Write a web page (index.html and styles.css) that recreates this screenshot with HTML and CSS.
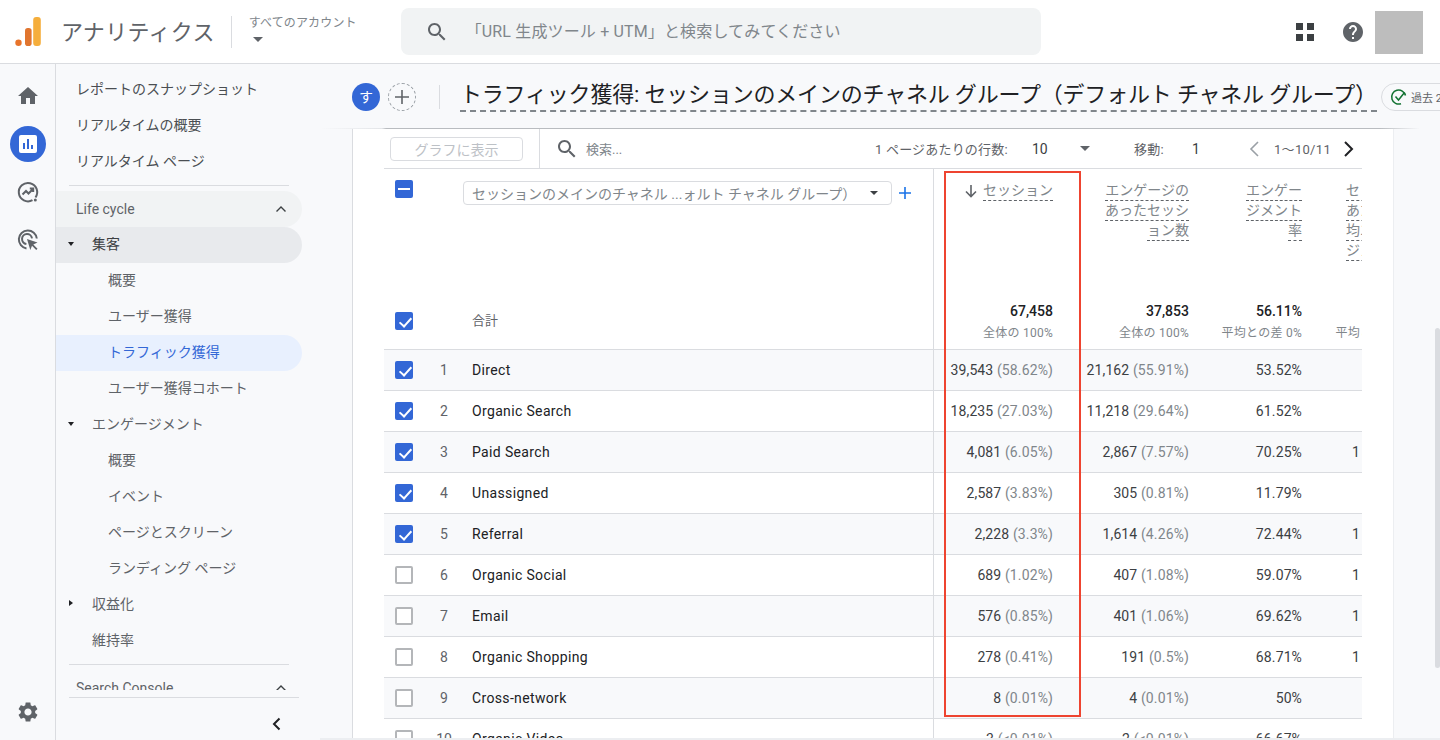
FILE: index.html
```html
<!DOCTYPE html>
<html lang="ja">
<head>
  <meta charset="UTF-8">
  <title>アナリティクス</title>
  <link rel="stylesheet" href="styles.css">
</head>
<body>
  <!-- トップバー -->
  <header class="topbar">
    <svg class="logo" width="26" height="29" viewBox="0 0 26 29">
      <circle cx="3.500" cy="25.700" r="3.200" fill="#e8742b"/>
      <rect x="10" y="11" width="6.600" height="18" rx="2.800" fill="#e0752f"/>
      <rect x="18.200" y="0" width="7.600" height="29" rx="3" fill="#f5ae3c"/>
    </svg>
    <div class="brand">アナリティクス</div>
    <div class="account">
      <div class="account-label">すべてのアカウント</div>
      <span class="caret caret-big"></span>
    </div>
    <div class="global-search">
      <svg class="icon" width="24" height="24" viewBox="0 0 24 24"><path d="M15.5 14h-.79l-.28-.27C15.41 12.59 16 11.11 16 9.5 16 5.91 13.09 3 9.5 3S3 5.91 3 9.5 5.91 16 9.5 16c1.61 0 3.09-.59 4.23-1.57l.27.28v.79l5 4.99L20.49 19l-4.99-5zm-6 0C7.01 14 5 11.99 5 9.5S7.01 5 9.5 5 14 7.01 14 9.5 11.99 14 9.5 14z"/></svg>
      <span class="global-search-text">「URL 生成ツール + UTM」と検索してみてください</span>
    </div>
    <div class="top-actions">
      <svg class="apps" width="18" height="18" viewBox="0 0 18 18"><path d="M0 0h7v7H0zM11 0h7v7h-7zM0 11h7v7H0zM11 11h7v7h-7z"/></svg>
      <svg class="icon" width="24" height="24" viewBox="0 0 24 24"><path d="M12 2C6.48 2 2 6.48 2 12s4.48 10 10 10 10-4.48 10-10S17.52 2 12 2zm1 17h-2v-2h2v2zm2.07-7.75l-.9.92C13.45 12.9 13 13.5 13 15h-2v-.5c0-1.1.45-2.1 1.17-2.83l1.24-1.26c.37-.36.59-.86.59-1.41 0-1.1-.9-2-2-2s-2 .9-2 2H8c0-2.21 1.79-4 4-4s4 1.79 4 4c0 .88-.36 1.68-.93 2.25z"/></svg>
      <div class="avatar"></div>
    </div>
  </header>

  <div class="app">
    <!-- 左端のアイコン列 -->
    <aside class="rail">
      <div class="rail-item">
        <svg class="icon" width="24" height="24" viewBox="0 0 24 24"><path d="M10 20v-6h4v6h5v-8h3L12 3 2 12h3v8z"/></svg>
      </div>
      <div class="rail-item">
        <div class="rail-active">
          <svg width="20" height="20" viewBox="0 0 20 20"><path fill="#fff" fill-rule="evenodd" d="M3 1h14a2 2 0 0 1 2 2v14a2 2 0 0 1-2 2H3a2 2 0 0 1-2-2V3a2 2 0 0 1 2-2zM5 9v6h2V9zM9 5v10h2V5zM13 11v4h2v-4z"/></svg>
        </div>
      </div>
      <div class="rail-item">
        <svg width="24" height="24" viewBox="0 0 24 24" fill="none" stroke="#5f6368" stroke-width="2"><path d="M19.500 17.500A9.200 9.200 0 1 0 16.500 20.200"/><path d="M6.500 14.500l3.500-3.500 2.500 2.500 4.500-4.500M13.800 8.500h3.400v3.400"/><circle cx="19.300" cy="20" r="1.500" fill="#5f6368" stroke="none"/></svg>
      </div>
      <div class="rail-item">
        <svg width="24" height="24" viewBox="0 0 24 24" fill="none" stroke="#5f6368" stroke-width="2"><path d="M10.500 20.400A9 9 0 1 1 20.800 10.500"/><path d="M10.400 16A5 5 0 1 1 16 10.400"/><path d="M11 11l10.500 3.600-4.200 1.900 4.200 4.200-1.300 1.300-4.200-4.200-1.700 4.200z" fill="#5f6368" stroke="none"/></svg>
      </div>
      <div class="rail-spacer"></div>
      <svg class="icon" width="24" height="24" viewBox="0 0 24 24"><path d="M19.14 12.94c.04-.3.06-.61.06-.94 0-.32-.02-.64-.07-.94l2.03-1.58c.18-.14.23-.41.12-.61l-1.92-3.32c-.12-.22-.37-.29-.59-.22l-2.39.96c-.5-.38-1.03-.7-1.62-.94l-.36-2.54c-.04-.24-.24-.41-.48-.41h-3.84c-.24 0-.43.17-.47.41l-.36 2.54c-.59.24-1.13.57-1.62.94l-2.39-.96c-.22-.08-.47 0-.59.22L2.74 8.87c-.12.21-.08.47.12.61l2.03 1.58c-.05.3-.09.63-.09.94s.02.64.07.94l-2.03 1.58c-.18.14-.23.41-.12.61l1.92 3.32c.12.22.37.29.59.22l2.39-.96c.5.38 1.03.7 1.62.94l.36 2.54c.05.24.24.41.48.41h3.84c.24 0 .44-.17.47-.41l.36-2.54c.59-.24 1.13-.56 1.62-.94l2.39.96c.22.08.47 0 .59-.22l1.92-3.32c.12-.22.07-.47-.12-.61l-2.01-1.58zM12 15.6c-1.98 0-3.6-1.62-3.6-3.6s1.62-3.6 3.6-3.6 3.6 1.62 3.6 3.6-1.62 3.6-3.6 3.6z"/></svg>
    </aside>

    <!-- レポートのナビ -->
    <nav class="sidenav">
      <div class="nav-scroll">
        <a class="nav-top">レポートのスナップショット</a>
        <a class="nav-top">リアルタイムの概要</a>
        <a class="nav-top">リアルタイム ページ</a>
        <div class="nav-rule"></div>
        <div class="nav-section">Life cycle <svg class="chev" width="12" height="8" viewBox="0 0 12 8"><path d="M1.500 6.500L6 2l4.500 4.500"/></svg></div>
        <div class="nav-group is-open"><span class="tri tri-down"></span>集客</div>
        <a class="nav-sub">概要</a>
        <a class="nav-sub">ユーザー獲得</a>
        <a class="nav-sub is-active">トラフィック獲得</a>
        <a class="nav-sub">ユーザー獲得コホート</a>
        <div class="nav-group"><span class="tri tri-down"></span>エンゲージメント</div>
        <a class="nav-sub">概要</a>
        <a class="nav-sub">イベント</a>
        <a class="nav-sub">ページとスクリーン</a>
        <a class="nav-sub">ランディング ページ</a>
        <div class="nav-group"><span class="tri tri-right"></span>収益化</div>
        <div class="nav-group"><span class="tri"></span>維持率</div>
        <div class="nav-rule nav-rule-2"></div>
        <div class="nav-section nav-section-2">Search Console <svg class="chev" width="12" height="8" viewBox="0 0 12 8"><path d="M1.500 6.500L6 2l4.500 4.500"/></svg></div>
      </div>
      <div class="nav-foot">
        <svg width="12" height="16" viewBox="0 0 12 16" fill="none" stroke="#202124" stroke-width="2"><path d="M9.500 2.500L4 8l5.500 5.500"/></svg>
      </div>
    </nav>

    <main class="content">
      <!-- タイトル -->
      <div class="titlebar">
        <div class="badge">す</div>
        <div class="add-compare">
          <svg width="14" height="14" viewBox="0 0 14 14"><path d="M6.200 0h1.600v6.200H14v1.600H7.800V14H6.200V7.800H0V6.200h6.200z" fill="#5f6368"/></svg>
        </div>
        <div class="title-sep"></div>
        <h1 class="title">トラフィック獲得: セッションのメインのチャネル グループ（デフォルト チャネル グループ）</h1>
        <div class="status-chip">
          <svg width="18" height="18" viewBox="0 0 18 18" fill="none" stroke="#137333" stroke-width="1.500"><path d="M15.500 7.500A7 7 0 1 0 11 15.700"/><path d="M5.500 8.500l3 3.500 6-7.500"/></svg>
          <span>過去 28 日間</span>
        </div>
      </div>

      <div class="body-wrap">
        <section class="card">
          <div class="table-wrap">
            <div class="toolbar">
              <div class="toolbar-left"><button class="plot-btn">グラフに表示</button></div>
              <div class="toolbar-right">
                <svg class="icon" width="24" height="24" viewBox="0 0 24 24"><path d="M15.500 14h-.79l-.28-.27C15.410 12.590 16 11.110 16 9.500 16 5.910 13.090 3 9.500 3S3 5.910 3 9.500 5.910 16 9.500 16c1.610 0 3.090-.59 4.230-1.570l.27.28v.79l5 4.990L20.490 19l-4.990-5zm-6 0C7.010 14 5 11.990 5 9.500S7.010 5 9.500 5 14 7.010 14 9.500 11.990 14 9.500 14z"/></svg>
                <span class="table-search">検索...</span>
                <span class="pager pager-rows">1 ページあたりの行数:</span>
                <span class="pager pager-num">10</span>
                <span class="caret"></span>
                <span class="pager pager-move">移動:</span>
                <span class="pager pager-page">1</span>
                <svg class="pager-prev" width="14" height="20" viewBox="0 0 14 20" fill="none" stroke="#9aa0a6" stroke-width="1.600"><path d="M11 3L4 10l7 7"/></svg>
                <span class="pager pager-range">1〜10/11</span>
                <svg class="pager-next" width="14" height="20" viewBox="0 0 14 20" fill="none" stroke="#202124" stroke-width="2"><path d="M3 3l7 7-7 7"/></svg>
              </div>
            </div>

            <div class="grid">
              <div class="row row-head">
                <div class="c-check"><span class="box is-minus"></span></div>
                <div class="c-dim">
                  <div class="dim-select"><span>セッションのメインのチャネル ...ォルト チャネル グループ）</span><span class="caret caret-small"></span></div>
                  <svg class="dim-add" width="12" height="12" viewBox="0 0 12 12"><path d="M5.200 0h1.600v5.200H12v1.600H6.800V12H5.200V6.800H0V5.200h5.200z" fill="#1a73e8"/></svg>
                </div>
                <div class="c-num c-1 head-cell">
                  <span class="head-sorted"><svg width="14" height="14" viewBox="0 0 14 14" fill="none" stroke="#5f6368" stroke-width="1.600"><path d="M7 1v11M2 7.500L7 12.500l5-5"/></svg><u>セッション</u></span>
                </div>
                <div class="c-num c-2 head-cell"><u>エンゲージの</u><u>あったセッシ</u><u>ョン数</u></div>
                <div class="c-num c-3 head-cell"><u>エンゲー</u><u>ジメント</u><u>率</u></div>
                <div class="c-num c-4 head-cell"><u>セッション</u><u>あたりの平</u><u>均エンゲー</u><u>ジメント時</u></div>
              </div>

              <div class="row row-total">
                <div class="c-check"><span class="box is-on"></span></div>
                <div class="c-dim total-label">合計</div>
                <div class="c-num c-1"><b>67,458</b><small>全体の 100%</small></div>
                <div class="c-num c-2"><b>37,853</b><small>全体の 100%</small></div>
                <div class="c-num c-3"><b>56.11%</b><small>平均との差 0%</small></div>
                <div class="c-num c-4"><b>&nbsp;</b><small>平均との差 0%</small></div>
              </div>

              <div class="row row-data">
                <div class="c-check"><span class="box is-on"></span></div><div class="c-idx">1</div><div class="c-name">Direct</div>
                <div class="c-num c-1">39,543 <i>(58.62%)</i></div><div class="c-num c-2">21,162 <i>(55.91%)</i></div><div class="c-num c-3">53.52%</div><div class="c-num c-4 cut"></div>
              </div>
              <div class="row row-data">
                <div class="c-check"><span class="box is-on"></span></div><div class="c-idx">2</div><div class="c-name">Organic Search</div>
                <div class="c-num c-1">18,235 <i>(27.03%)</i></div><div class="c-num c-2">11,218 <i>(29.64%)</i></div><div class="c-num c-3">61.52%</div><div class="c-num c-4 cut"></div>
              </div>
              <div class="row row-data">
                <div class="c-check"><span class="box is-on"></span></div><div class="c-idx">3</div><div class="c-name">Paid Search</div>
                <div class="c-num c-1">4,081 <i>(6.05%)</i></div><div class="c-num c-2">2,867 <i>(7.57%)</i></div><div class="c-num c-3">70.25%</div><div class="c-num c-4 cut">1</div>
              </div>
              <div class="row row-data">
                <div class="c-check"><span class="box is-on"></span></div><div class="c-idx">4</div><div class="c-name">Unassigned</div>
                <div class="c-num c-1">2,587 <i>(3.83%)</i></div><div class="c-num c-2">305 <i>(0.81%)</i></div><div class="c-num c-3">11.79%</div><div class="c-num c-4 cut"></div>
              </div>
              <div class="row row-data">
                <div class="c-check"><span class="box is-on"></span></div><div class="c-idx">5</div><div class="c-name">Referral</div>
                <div class="c-num c-1">2,228 <i>(3.3%)</i></div><div class="c-num c-2">1,614 <i>(4.26%)</i></div><div class="c-num c-3">72.44%</div><div class="c-num c-4 cut">1</div>
              </div>
              <div class="row row-data">
                <div class="c-check"><span class="box"></span></div><div class="c-idx">6</div><div class="c-name">Organic Social</div>
                <div class="c-num c-1">689 <i>(1.02%)</i></div><div class="c-num c-2">407 <i>(1.08%)</i></div><div class="c-num c-3">59.07%</div><div class="c-num c-4 cut">1</div>
              </div>
              <div class="row row-data">
                <div class="c-check"><span class="box"></span></div><div class="c-idx">7</div><div class="c-name">Email</div>
                <div class="c-num c-1">576 <i>(0.85%)</i></div><div class="c-num c-2">401 <i>(1.06%)</i></div><div class="c-num c-3">69.62%</div><div class="c-num c-4 cut">1</div>
              </div>
              <div class="row row-data">
                <div class="c-check"><span class="box"></span></div><div class="c-idx">8</div><div class="c-name">Organic Shopping</div>
                <div class="c-num c-1">278 <i>(0.41%)</i></div><div class="c-num c-2">191 <i>(0.5%)</i></div><div class="c-num c-3">68.71%</div><div class="c-num c-4 cut">1</div>
              </div>
              <div class="row row-data">
                <div class="c-check"><span class="box"></span></div><div class="c-idx">9</div><div class="c-name">Cross-network</div>
                <div class="c-num c-1">8 <i>(0.01%)</i></div><div class="c-num c-2">4 <i>(0.01%)</i></div><div class="c-num c-3">50%</div><div class="c-num c-4 cut"></div>
              </div>
              <div class="row row-data">
                <div class="c-check"><span class="box"></span></div><div class="c-idx">10</div><div class="c-name">Organic Video</div>
                <div class="c-num c-1">3 <i>(&lt;0.01%)</i></div><div class="c-num c-2">2 <i>(&lt;0.01%)</i></div><div class="c-num c-3">66.67%</div><div class="c-num c-4 cut"></div>
              </div>
            </div>
          </div>
        </section>
        <div class="scroll-strip"><div class="scroll-thumb"></div></div>
        <!-- 赤枠の注釈 -->
        <div class="red-box"></div>
      </div>
      <div class="hscroll"></div>
    </main>
  </div>
</body>
</html>
```

FILE: styles.css
```css
/* 全体 */
* {
  margin: 0;
  padding: 0;
  box-sizing: border-box;
}

:root {
  --bg-soft: #f8f9fb;
  --line: #dadce0;
  --text: #202124;
  --text-2: #3c4043;
  --text-3: #5f6368;
  --text-4: #80868b;
  --blue: #3367d6;
  --icon: #5f6368;
}

html, body {
  height: 740px;
  overflow: hidden;
}

body {
  display: flex;
  flex-direction: column;
  font-family: Roboto, "Noto Sans CJK JP", sans-serif;
  font-size: 13px;
  color: var(--text);
  background: #fff;
}

.icon {
  fill: var(--icon);
  flex: none;
  display: block;
}

.caret {
  display: inline-block;
  width: 0;
  height: 0;
  border-left: 5px solid transparent;
  border-right: 5px solid transparent;
  border-top: 5px solid var(--text-3);
}

/* トップバー */
.topbar {
  height: 64px;
  flex: none;
  display: flex;
  align-items: center;
  border-bottom: 1px solid var(--line);
  padding-left: 15px;
  background: #fff;
}

.logo {
  flex: none;
}

.brand {
  margin-left: 20px;
  padding-right: 16px;
  height: 32px;
  font-size: 22px;
  color: var(--text-3);
  line-height: 34px;
  border-right: 1px solid var(--line);
  letter-spacing: 0.3px;
}

.account {
  width: 152px;
  margin-left: 17px;
  display: flex;
  flex-direction: column;
  align-items: flex-start;
  margin-top: -6px;
}

.account-label {
  font-size: 12px;
  line-height: 16px;
  letter-spacing: 0.15px;
  color: var(--text-4);
}

.caret-big {
  margin: 6px 0 0 4px;
}

.global-search {
  width: 640px;
  height: 47px;
  display: flex;
  align-items: center;
  padding-left: 24px;
  background: #f1f3f4;
  border-radius: 8px;
}

.global-search-text {
  margin: -3px 0 0 17px;
  font-size: 16px;
  letter-spacing: 0.15px;
  color: var(--text-4);
}

.top-actions {
  margin-left: auto;
  display: flex;
  align-items: center;
  padding-right: 17px;
}

.apps {
  fill: #3c4043;
  margin-right: 27px;
}

.avatar {
  width: 48px;
  height: 43px;
  margin: 2px 0 0 10px;
  background: #bdbdbd;
}

/* 本体 */
.app {
  flex: 1;
  min-height: 0;
  display: flex;
}

/* アイコン列 */
.rail {
  width: 56px;
  flex: none;
  display: flex;
  flex-direction: column;
  align-items: center;
  padding: 8px 0 16px;
  background: var(--bg-soft);
  border-right: 1px solid var(--line);
}

.rail-item {
  height: 48px;
  display: flex;
  align-items: center;
  justify-content: center;
}

.rail-active {
  width: 36px;
  height: 36px;
  border-radius: 50%;
  display: flex;
  align-items: center;
  justify-content: center;
  background: var(--blue);
}

.rail-spacer {
  flex: 1;
}

/* ナビ */
.sidenav {
  width: 264px;
  flex: none;
  display: flex;
  flex-direction: column;
  background: var(--bg-soft);
  font-size: 14px;
  color: #4a4e52;
}

.nav-scroll {
  height: 626px;
  overflow: hidden;
  width: 246px;
  padding-top: 7px;
}

.nav-top {
  display: block;
  height: 36px;
  line-height: 36px;
  padding-left: 20px;
}

.nav-rule {
  height: 1px;
  margin: 6px 13px 5px 13px;
  background: var(--line);
}

.nav-rule-2 {
  margin-top: 5px;
}

.nav-section {
  height: 36px;
  display: flex;
  align-items: center;
  justify-content: space-between;
  padding: 0 15px 0 20px;
  border-radius: 0 18px 18px 0;
  background: #f1f3f4;
  color: var(--text-3);
}

.nav-section-2 {
  background: none;
}

.chev {
  fill: none;
  stroke: var(--text-2);
  stroke-width: 1.4;
}

.nav-group {
  display: flex;
  align-items: center;
  height: 36px;
  padding-bottom: 4px;
  border-radius: 0 18px 18px 0;
  color: var(--text-3);
}

.nav-group.is-open {
  background: #e8eaed;
  color: var(--text-2);
}

.tri {
  width: 36px;
  flex: none;
  position: relative;
  height: 10px;
}

.tri-down::before {
  content: "";
  position: absolute;
  left: 12px;
  top: 4px;
  border-left: 3.500px solid transparent;
  border-right: 3.500px solid transparent;
  border-top: 4px solid #202124;
}

.tri-right::before {
  content: "";
  position: absolute;
  left: 13px;
  top: 2px;
  border-top: 3.500px solid transparent;
  border-bottom: 3.500px solid transparent;
  border-left: 4px solid #202124;
}

.nav-sub {
  display: block;
  height: 36px;
  line-height: 34px;
  padding-left: 52px;
  border-radius: 0 18px 18px 0;
  color: var(--text-3);
}

.nav-sub.is-active {
  background: #e8f0fe;
  color: var(--blue);
}

.nav-foot {
  height: 43px;
  width: 230px;
  margin: 7px 0 0 13px;
  padding: 10px 17px 0 0;
  border-top: 1px solid var(--line);
  display: flex;
  align-items: center;
  justify-content: flex-end;
}

/* メイン */
.content {
  flex: 1;
  min-width: 0;
  display: flex;
  flex-direction: column;
  background: var(--bg-soft);
  overflow: hidden;
}

.titlebar {
  height: 65px;
  flex: none;
  display: flex;
  align-items: center;
  padding-left: 32px;
  white-space: nowrap;
  background: linear-gradient(90deg, transparent, #e3e5e8 62px, #b9bcc0 66px, #b9bcc0 1060px, transparent 1100px) bottom / 100% 1px no-repeat;
}

.badge {
  width: 28px;
  height: 28px;
  flex: none;
  border-radius: 50%;
  background: var(--blue);
  color: #fff;
  font-size: 14px;
  line-height: 28px;
  text-align: center;
}

.add-compare {
  width: 28px;
  height: 28px;
  flex: none;
  margin-left: 8px;
  border-radius: 50%;
  border: 1px dashed #9aa0a6;
  display: flex;
  align-items: center;
  justify-content: center;
}

.title-sep {
  width: 1px;
  height: 24px;
  flex: none;
  margin: 0 20px 0 23px;
  background: var(--line);
}

.title {
  flex: none;
  font-size: 22px;
  font-weight: 400;
  line-height: 30px;
  letter-spacing: -0.19px;
  color: var(--text);
  border-bottom: 2px dashed #80868b;
  margin-top: -2px;
}

.status-chip {
  flex: none;
  height: 28px;
  margin-left: 4px;
  padding: 0 10px 0 8px;
  display: flex;
  align-items: center;
  gap: 3px;
  border: 1px solid var(--line);
  border-radius: 14px;
  font-size: 11px;
  color: var(--text-3);
}

.body-wrap {
  flex: 1;
  min-height: 0;
  position: relative;
  display: flex;
  margin-left: 32px;
}

.card {
  width: 1042px;
  flex: none;
  background: #fff;
  border-left: 1px solid var(--line);
  border-right: 1px solid #eceef1;
  padding-left: 31px;
  overflow: hidden;
}

.table-wrap {
  width: 978px;
  overflow: hidden;
}

/* 表のツールバー */
.toolbar {
  height: 40px;
  display: flex;
  border-bottom: 1px solid var(--line);
}

.toolbar-left {
  width: 156px;
  flex: none;
  padding: 8px 0 0 6px;
  border-right: 1px solid var(--line);
}

.plot-btn {
  display: block;
  width: 133px;
  height: 24px;
  border: 1px solid var(--line);
  border-radius: 4px;
  background: #fff;
  font: 14px Roboto, "Noto Sans CJK JP", sans-serif;
  color: #bdc1c6;
}

.toolbar-right {
  flex: 1;
  display: flex;
  align-items: center;
  padding-left: 15px;
  white-space: nowrap;
}

.table-search {
  margin-left: 7px;
  width: 289px;
  color: var(--text-4);
}

.pager {
  font-size: 13px;
  letter-spacing: 0.2px;
  color: var(--text-3);
}

.pager-rows {
  width: 157px;
}

.pager-num {
  width: 48px;
  font-size: 14px;
  letter-spacing: 0;
  color: var(--text-2);
}

.pager-move {
  margin-left: 44px;
  width: 58px;
}

.pager-page {
  width: 55px;
  font-size: 14px;
  letter-spacing: 0;
  color: var(--text-2);
}

.pager-range {
  margin-left: 13px;
  width: 68px;
  letter-spacing: 0.3px;
  color: var(--text-3);
}

/* 表 */
.row {
  display: grid;
  grid-template-columns: 46px 30px 474px 131px 136px 113px 114px;
  border-bottom: 1px solid var(--line);
}

.c-check {
  display: flex;
  justify-content: center;
  padding-right: 6px;
}

.box {
  width: 18px;
  height: 18px;
  flex: none;
  border: 2px solid #b4b6b9;
  border-radius: 2px;
  position: relative;
  background: #fff;
}

.box.is-on, .box.is-minus {
  border: none;
  background: var(--blue);
}

.box.is-on::after {
  content: "";
  position: absolute;
  left: 6.500px;
  top: 3px;
  width: 5px;
  height: 10px;
  border: solid #fff;
  border-width: 0 2px 2px 0;
  transform: rotate(42deg);
}

.box.is-minus::after {
  content: "";
  position: absolute;
  left: 3px;
  top: 8px;
  width: 12px;
  height: 2px;
  background: #fff;
}

.row-head {
  height: 131px;
  border-bottom: none;
}

.row-head .c-check {
  padding-top: 11px;
}

.row-head .c-dim, .row-total .c-dim {
  grid-column: 2 / 4;
}

.row-head .c-dim {
  display: flex;
  align-items: flex-start;
  padding: 12px 0 0 33px;
  border-right: 1px solid var(--line);
}

.dim-select {
  width: 429px;
  height: 24px;
  flex: none;
  display: flex;
  align-items: center;
  justify-content: space-between;
  padding: 0 13px 0 8px;
  border: 1px solid var(--line);
  border-radius: 4px;
  font-size: 14px;
  white-space: nowrap;
  color: var(--text-4);
}

.caret-small {
  border-left-width: 4px;
  border-right-width: 4px;
  border-top-width: 4px;
  border-top-color: var(--text-2);
}

.dim-add {
  margin: 6px 0 0 7px;
}

.c-num {
  padding-right: 12px;
  text-align: right;
  white-space: nowrap;
  overflow: hidden;
}

.head-cell {
  display: flex;
  flex-direction: column;
  align-items: flex-end;
  padding-top: 12px;
  font-size: 14px;
  color: var(--text-4);
}

.head-cell u {
  display: block;
  line-height: 18px;
  padding-bottom: 1px;
  text-decoration: none;
  border-bottom: 1px dashed #5f6368;
}

.head-sorted {
  display: flex;
  align-items: flex-start;
  gap: 5px;
}

.head-sorted svg {
  margin-top: 3px;
}

.row-total {
  height: 50px;
  align-items: start;
}

.row-total .c-check {
  padding-top: 12px;
}

.total-label {
  padding: 10px 0 0 42px;
  border-right: 1px solid var(--line);
  height: 49px;
  color: var(--text-3);
}

.row-total .c-num {
  padding-top: 2px;
}

.row-total b {
  display: block;
  font-size: 14px;
  font-weight: 500;
  line-height: 18px;
  color: var(--text);
}

.row-total small {
  display: block;
  margin-top: 4px;
  font-size: 12px;
  line-height: 18px;
  letter-spacing: 0.25px;
  color: var(--text-4);
}

.row-data {
  height: 41px;
  align-items: center;
  font-size: 14px;
}

.row-data:nth-child(odd) {
  background: var(--bg-soft);
}

.row-data .c-check, .row-data .c-idx, .row-data .c-name, .row-data .c-num {
  line-height: 40px;
}

.row-data .c-check {
  align-items: center;
  height: 40px;
}

.row-data .c-num {
  letter-spacing: 0.12px;
  color: var(--text-2);
}

.c-idx {
  padding-right: 2px;
  color: var(--text-3);
  text-align: center;
}

.c-name {
  padding-left: 12px;
  height: 40px;
  border-right: 1px solid var(--line);
  letter-spacing: 0.35px;
  color: var(--text);
}

.row-data i {
  font-style: normal;
  color: var(--text-4);
}

.row-data .cut {
  padding-right: 0;
  text-align: left;
  padding-left: 38px;
}

/* 右のスクロール領域 */
.scroll-strip {
  flex: 1;
  position: relative;
}

.scroll-thumb {
  position: absolute;
  right: 0;
  top: 199px;
  width: 5px;
  height: 340px;
  border-radius: 3px;
  background: #dadce0;
}

/* 注釈 */
.red-box {
  position: absolute;
  left: 592px;
  top: 42px;
  width: 137px;
  height: 546px;
  border: 2px solid #ee4430;
}

.hscroll {
  height: 2px;
  flex: none;
  background: #eceef1;
}
```
